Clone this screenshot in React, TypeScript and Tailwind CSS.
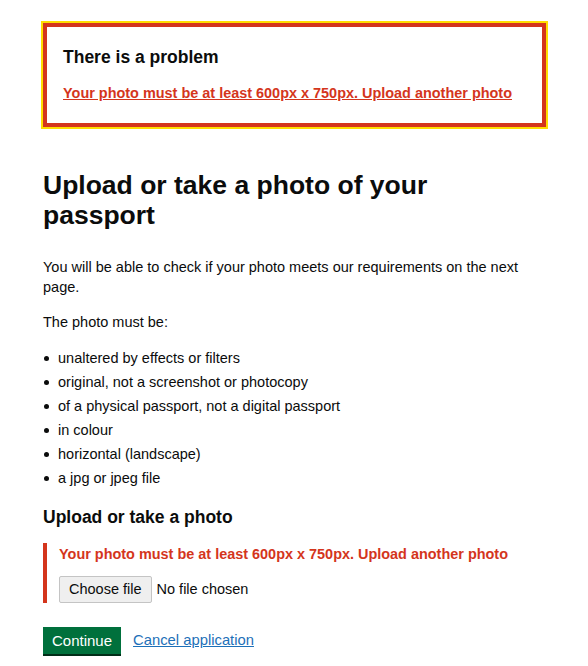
import React from 'react';

const requirements = [
  'unaltered by effects or filters',
  'original, not a screenshot or photocopy',
  'of a physical passport, not a digital passport',
  'in colour',
  'horizontal (landscape)',
  'a jpg or jpeg file',
];

const errorText = 'Your photo must be at least 600px x 750px. Upload another photo';

export default function App() {
  return (
    <div className="min-h-screen bg-white font-['Liberation_Sans',Arial,sans-serif] text-[#0b0c0c]">
      <main className="pl-[43px] pr-[42px] pt-[23px] pb-10">
        {/* Error summary */}
        <div className="border-4 border-[#d4351c] outline-2 outline-[#ffdd00] px-[16px] pt-[19px] pb-[20px]">
          <h2 className="text-[17.5px] leading-[22px] font-bold">There is a problem</h2>
          <a href="#photo" className="block mt-[15px] text-[14.45px] leading-[20px] font-bold text-[#d4351c] underline">
            {errorText}
          </a>
        </div>

        <h1 className="mt-[43px] max-w-[440px] text-[26.5px] leading-[30px] font-bold">
          Upload or take a photo of your passport
        </h1>

        <p className="mt-[27px] text-[14.5px] leading-[20px]">
          You will be able to check if your photo meets our requirements on the next page.
        </p>
        <p className="mt-[15px] text-[14.5px] leading-[20px]">The photo must be:</p>

        <ul className="mt-[16px] flex flex-col gap-[4px] text-[14.5px] leading-[20px]">
          {requirements.map((item) => (
            <li key={item} className="flex items-start">
              <span className="mt-[8px] ml-[1px] h-[5px] w-[5px] shrink-0 rounded-full bg-[#0b0c0c]" />
              <span className="ml-[9px]">{item}</span>
            </li>
          ))}
        </ul>

        <h2 className="mt-[18px] text-[17.5px] leading-[22px] font-bold">Upload or take a photo</h2>

        {/* File upload with error */}
        <div id="photo" className="mt-[15px] border-l-4 border-[#d4351c] pl-[12px] pt-[1px]">
          <p className="text-[14.45px] leading-[20px] font-bold text-[#d4351c]">{errorText}</p>
          <div className="mt-[12px] flex items-center">
            <button
              type="button"
              className="h-[27px] px-[9px] bg-[#efefef] border border-[#c4c4c4] rounded-[2px] text-[14.5px] text-[#0b0c0c]"
            >
              Choose file
            </button>
            <span className="ml-[5px] text-[14.5px]">No file chosen</span>
          </div>
        </div>

        {/* Actions */}
        <div className="mt-[24px] flex items-center gap-[12px]">
          <button
            type="button"
            className="px-[9px] py-[4px] bg-[#00703c] text-white text-[15px] leading-[19px] shadow-[0_2px_0_#002d18]"
          >
            Continue
          </button>
          <a href="#" className="text-[14.8px] leading-[19px] text-[#1d70b8] underline">
            Cancel application
          </a>
        </div>
      </main>
    </div>
  );
}
